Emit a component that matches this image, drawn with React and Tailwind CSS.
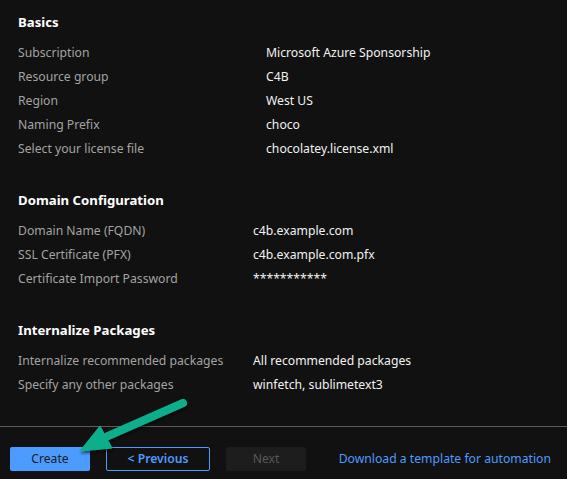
import React from "react";

const font = { fontFamily: '"Noto Sans", "Open Sans", sans-serif' };

function Row({ label, value, labelW }) {
  return (
    <div className="flex h-6 items-center text-[12.2px]">
      <div className={labelW + " shrink-0 text-[#a3a3a3]"}>{label}</div>
      <div className="text-[#f2f2f2]">{value}</div>
    </div>
  );
}

function Section({ title, rows, className, labelW }) {
  return (
    <div className={className}>
      <div className="h-6 flex items-center text-[13.2px] font-bold text-white">{title}</div>
      <div className="mt-[6px]">
        {rows.map(([l, v]) => (
          <Row key={l} label={l} value={v} labelW={labelW} />
        ))}
      </div>
    </div>
  );
}

export default function App() {
  return (
    <div className="relative w-[567px] h-[479px] bg-[#111111] overflow-hidden" style={font}>
      <div className="px-[18px] pt-[11px]">
        <Section
          labelW="w-[248px]"
          title="Basics"
          rows={[
            ["Subscription", "Microsoft Azure Sponsorship"],
            ["Resource group", "C4B"],
            ["Region", "West US"],
            ["Naming Prefix", "choco"],
            ["Select your license file", "chocolatey.license.xml"],
          ]}
        />
        <Section
          labelW="w-[235px]"
          className="mt-[28px]"
          title="Domain Configuration"
          rows={[
            ["Domain Name (FQDN)", "c4b.example.com"],
            ["SSL Certificate (PFX)", "c4b.example.com.pfx"],
            ["Certificate Import Password", "***********"],
          ]}
        />
        <Section
          labelW="w-[235px]"
          className="mt-[28px]"
          title="Internalize Packages"
          rows={[
            ["Internalize recommended packages", "All recommended packages"],
            ["Specify any other packages", "winfetch, sublimetext3"],
          ]}
        />
      </div>
      <div className="absolute left-0 right-0 top-[426px] h-px bg-[#5c5c5c]" />
      <div className="absolute left-0 right-0 top-[447px] flex items-center px-[10px] text-[12.2px]">
        <button className="w-[80px] h-6 rounded-[2px] bg-[#4c9bff] text-[#1b1b1b]">Create</button>
        <button className="ml-4 w-[104px] h-6 rounded-[2px] border border-[#4c9bff] text-[#4c9bff] font-semibold">
          &lt; Previous
        </button>
        <button className="ml-4 w-[80px] h-6 rounded-[2px] bg-[#1d1d1d] text-[#585858]">Next</button>
        <span className="ml-auto mr-[6px] text-[#4c9bff]">Download a template for automation</span>
      </div>
      <svg className="absolute left-0 top-0 pointer-events-none" width="567" height="479">
        <defs>
          <filter id="sh" x="-20%" y="-20%" width="140%" height="140%">
            <feDropShadow dx="1" dy="2" stdDeviation="1.5" floodColor="#000" floodOpacity="0.6" />
          </filter>
        </defs>
        <g filter="url(#sh)" fill="#0aae8c" stroke="#0aae8c">
          <line x1="183" y1="403" x2="108" y2="436" strokeWidth="8" strokeLinecap="round" />
          <polygon points="80,451 100,426 112,448" strokeWidth="1" strokeLinejoin="round" />
        </g>
      </svg>
    </div>
  );
}
